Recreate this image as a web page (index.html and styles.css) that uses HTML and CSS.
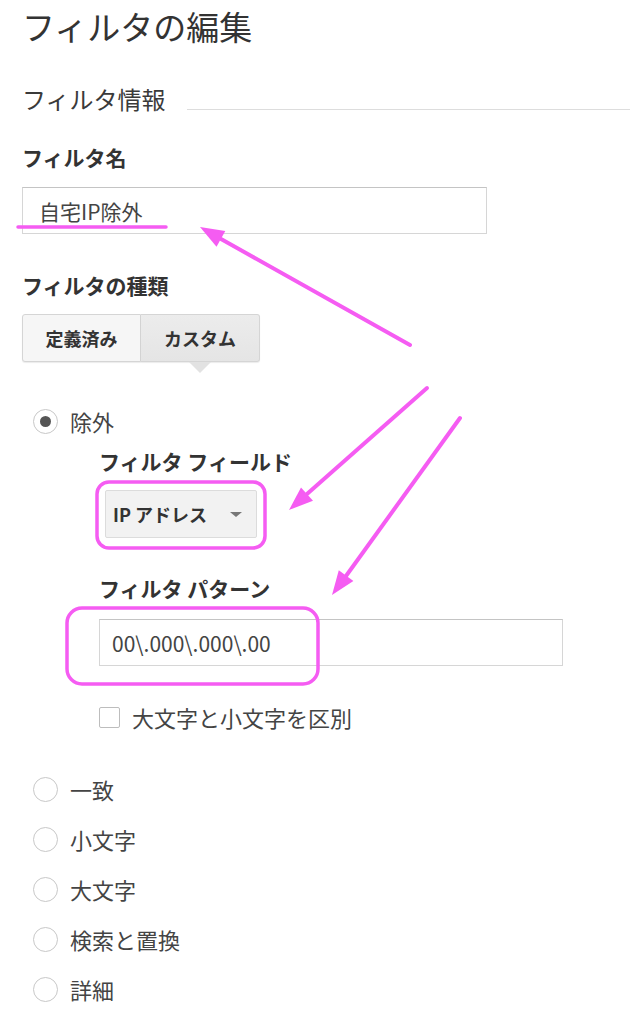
FILE: index.html
```html
<!DOCTYPE html>
<html lang="ja">
<head>
<meta charset="utf-8">
<title>フィルタの編集</title>
<link rel="stylesheet" href="styles.css">
</head>
<body>
<div class="page">
  <h1 class="title">フィルタの編集</h1>

  <div class="section-head">
    <span class="section-title">フィルタ情報</span>
    <span class="rule"></span>
  </div>

  <div class="label label-name">フィルタ名</div>
  <input class="text-input name-input" type="text" value="自宅IP除外" readonly>

  <div class="label label-type">フィルタの種類</div>
  <div class="tabs">
    <div class="tab">定義済み</div>
    <div class="tab active">カスタム</div>
  </div>

  <div class="radio-row first-radio">
    <span class="radio checked"></span>
    <span class="radio-text">除外</span>
  </div>

  <div class="sub">
    <div class="label label-field">フィルタ フィールド</div>
    <div class="select">
      <span class="select-text">IP アドレス</span>
      <span class="caret"></span>
    </div>

    <div class="label label-pattern">フィルタ パターン</div>
    <input class="text-input pattern-input" type="text" value="00\.000\.000\.00" readonly>

    <div class="check-row">
      <span class="checkbox"></span>
      <span class="check-text">大文字と小文字を区別</span>
    </div>
  </div>

  <div class="radio-list">
    <div class="radio-row"><span class="radio"></span><span class="radio-text">一致</span></div>
    <div class="radio-row"><span class="radio"></span><span class="radio-text">小文字</span></div>
    <div class="radio-row"><span class="radio"></span><span class="radio-text">大文字</span></div>
    <div class="radio-row"><span class="radio"></span><span class="radio-text">検索と置換</span></div>
    <div class="radio-row"><span class="radio"></span><span class="radio-text">詳細</span></div>
  </div>

  <svg class="annotations" width="630" height="1024" viewBox="0 0 630 1024" aria-hidden="true">
    <g stroke="#f55cf2" fill="none" stroke-linecap="round" stroke-linejoin="round">
      <line x1="18" y1="227" x2="166" y2="227" stroke-width="3.5"/>
      <rect x="97" y="482" width="168" height="66" rx="12" stroke-width="3.5"/>
      <rect x="67" y="608" width="251" height="76" rx="15" stroke-width="3.5"/>
      <line x1="410" y1="345" x2="221" y2="239" stroke-width="4"/>
      <line x1="427" y1="388" x2="307" y2="494" stroke-width="4"/>
      <line x1="460" y1="418" x2="346" y2="576" stroke-width="4"/>
    </g>
    <g fill="#f55cf2">
      <polygon points="200,227 225.3,230.9 216.5,246.7"/>
      <polygon points="289,510 313,500.8 301,487.4"/>
      <polygon points="332,595 353.4,580.9 338.8,570.3"/>
    </g>
  </svg>
</div>
</body>
</html>
```

FILE: styles.css
```css
* {
  box-sizing: border-box;
}

html, body {
  margin: 0;
  padding: 0;
  background: #ffffff;
}

body {
  font-family: "Noto Sans CJK JP", "Noto Sans", sans-serif;
  color: #333333;
}

.page {
  position: relative;
  width: 630px;
  height: 1024px;
  padding-left: 22px;
  overflow: hidden;
}

.title {
  margin: 4px 0 0 0;
  font-size: 33px;
  line-height: 44px;
  font-weight: 400;
  color: #333333;
}

.section-head {
  display: flex;
  align-items: flex-end;
  margin-top: 35px;
  height: 32px;
}

.section-title {
  font-size: 24px;
  line-height: 32px;
  color: #3a3a3a;
  white-space: nowrap;
}

.rule {
  flex: 1;
  height: 1px;
  background: #dddddd;
  margin-left: 21px;
  margin-bottom: 5px;
}

.label {
  font-size: 21px;
  line-height: 28px;
  font-weight: 700;
  color: #333333;
  white-space: nowrap;
}

.label-name {
  margin-top: 28px;
}

.text-input {
  display: block;
  height: 47px;
  border: 1px solid #d6d6d6;
  border-top-color: #c4c4c4;
  border-radius: 0;
  background: #ffffff;
  font-family: "Noto Sans CJK JP", "Noto Sans", sans-serif;
  font-size: 21px;
  color: #444444;
  outline: none;
  margin: 0;
}

.name-input {
  margin-top: 16px;
  width: 465px;
  padding: 0 0 0 16px;
}

.label-type {
  margin-top: 37px;
}

.tabs {
  display: flex;
  margin-top: 15px;
  height: 48px;
}

.tab {
  position: relative;
  width: 119px;
  height: 48px;
  display: flex;
  align-items: center;
  justify-content: center;
  font-size: 18px;
  font-weight: 700;
  color: #333333;
  border: 1px solid #d5d5d5;
  background: #f6f6f6;
  box-shadow: 0 1px 1px rgba(0, 0, 0, 0.08);
}

.tab:first-child {
  border-radius: 3px 0 0 3px;
}

.tab.active {
  border-left: none;
  border-radius: 0 3px 3px 0;
  background: linear-gradient(#ececec, #e5e5e5);
}

.tab.active::after {
  content: "";
  position: absolute;
  left: 50%;
  bottom: -12px;
  margin-left: -11px;
  border-left: 11px solid transparent;
  border-right: 11px solid transparent;
  border-top: 11px solid #e2e2e2;
}

.radio-row {
  display: flex;
  align-items: center;
  height: 30px;
  padding-left: 11px;
}

.first-radio {
  margin-top: 44px;
}

.radio {
  position: relative;
  width: 25px;
  height: 25px;
  border-radius: 50%;
  border: 1.5px solid #c8c8c8;
  background: #ffffff;
  flex-shrink: 0;
}

.radio.checked::after {
  content: "";
  position: absolute;
  left: 50%;
  top: 50%;
  width: 11px;
  height: 11px;
  margin: -5.5px 0 0 -5.5px;
  border-radius: 50%;
  background: #555555;
}

.radio-text {
  margin-left: 12px;
  font-size: 22px;
  line-height: 30px;
  color: #444444;
  white-space: nowrap;
}

.sub {
  margin-left: 77px;
}

.label-field {
  margin-top: 11px;
}

.select {
  display: flex;
  align-items: center;
  justify-content: space-between;
  margin-top: 15px;
  margin-left: 6px;
  width: 152px;
  height: 48px;
  padding: 0 14px 0 7px;
  border: 1px solid #dcdcdc;
  border-radius: 2px;
  background: #f2f2f2;
}

.select-text {
  font-size: 18px;
  font-weight: 700;
  color: #333333;
  white-space: nowrap;
}

.caret {
  width: 0;
  height: 0;
  border-left: 6px solid transparent;
  border-right: 6px solid transparent;
  border-top: 5px solid #777777;
}

.label-pattern {
  margin-top: 36px;
}

.pattern-input {
  margin-top: 17px;
  width: 464px;
  padding: 0 0 0 12px;
}

.check-row {
  display: flex;
  align-items: center;
  height: 30px;
  margin-top: 36px;
}

.checkbox {
  width: 21px;
  height: 21px;
  border: 1px solid #bdbdbd;
  border-radius: 2px;
  background: #ffffff;
  flex-shrink: 0;
}

.check-text {
  margin-left: 12px;
  font-size: 22px;
  line-height: 30px;
  color: #444444;
  white-space: nowrap;
}

.radio-list {
  display: flex;
  flex-direction: column;
  gap: 20px;
  margin-top: 42px;
}

.annotations {
  position: absolute;
  left: 0;
  top: 0;
  pointer-events: none;
}
```
